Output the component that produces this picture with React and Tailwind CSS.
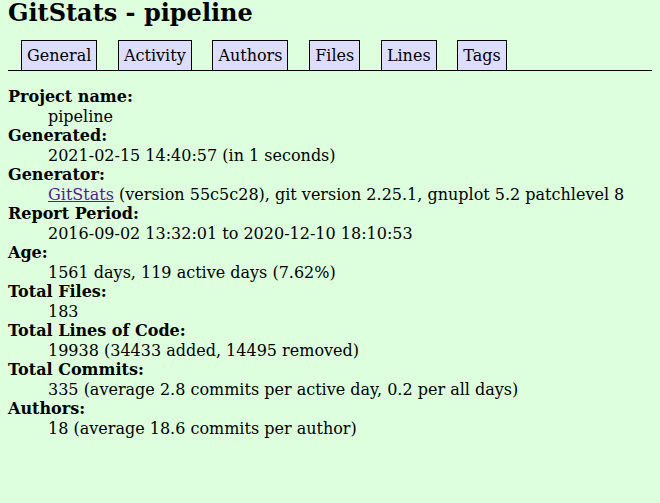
const tabs = ['General', 'Activity', 'Authors', 'Files', 'Lines', 'Tags'];

const rows = [
  { label: 'Project name:', value: 'pipeline' },
  { label: 'Generated:', value: '2021-02-15 14:40:57 (in 1 seconds)' },
  {
    label: 'Generator:',
    value: (
      <>
        <a href="#" className="text-[#551a8b] underline">GitStats</a> (version 55c5c28), git version 2.25.1, gnuplot 5.2 patchlevel 8
      </>
    ),
  },
  { label: 'Report Period:', value: '2016-09-02 13:32:01 to 2020-12-10 18:10:53' },
  { label: 'Age:', value: '1561 days, 119 active days (7.62%)' },
  { label: 'Total Files:', value: '183' },
  { label: 'Total Lines of Code:', value: '19938 (34433 added, 14495 removed)' },
  { label: 'Total Commits:', value: '335 (average 2.8 commits per active day, 0.2 per all days)' },
  { label: 'Authors:', value: '18 (average 18.6 commits per author)' },
];

export default function App() {
  return (
    <div className="min-h-screen bg-[#ddffdd] px-2 text-black font-['DejaVu_Serif',serif]">
      <h1 className="text-[24px] font-bold leading-[26px]">GitStats - pipeline</h1>

      <div className="mt-[14px] flex items-end gap-[20.7px] border-b border-black pl-[13px]">
        {tabs.map((t) => (
          <div key={t} className="-mb-px border border-black bg-[#ddddff] px-[5px] py-[5px] text-[16px] leading-[19px]">
            {t}
          </div>
        ))}
      </div>

      <dl className="mt-[16px] text-[16px] leading-[19.5px]">
        {rows.map((r) => (
          <div key={r.label}>
            <dt className="font-bold">{r.label}</dt>
            <dd className="ml-10">{r.value}</dd>
          </div>
        ))}
      </dl>
    </div>
  );
}
